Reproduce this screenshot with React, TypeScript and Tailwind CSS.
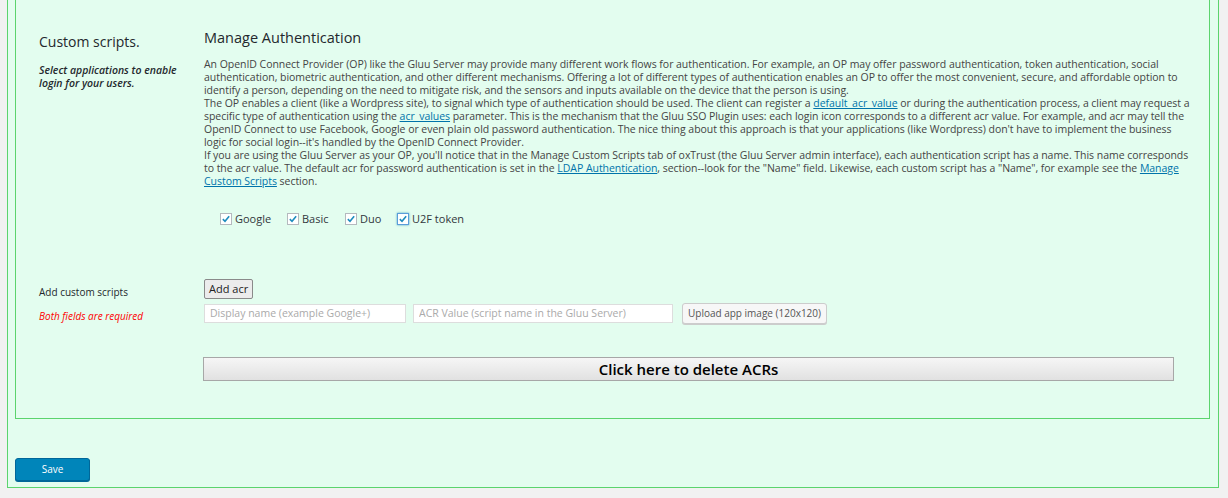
const font = { fontFamily: '"Open Sans", "Liberation Sans", sans-serif' };

const CheckItem = ({ label, focused }: { label: string; focused?: boolean }) => (
  <label className="flex items-center gap-[3px] text-[11px] text-[#32373c]">
    <span
      className={
        "flex h-[12px] w-[12px] items-center justify-center border bg-white " +
        (focused ? "border-[#5b9dd9] shadow-[0_0_2px_rgba(30,140,190,0.8)]" : "border-[#b4b9be]")
      }
    >
      <svg viewBox="0 0 12 12" className="h-[10px] w-[10px]">
        <path d="M2.2 6.2 L4.8 8.8 L9.8 2.6" fill="none" stroke="#1e8cbe" strokeWidth="1.9" />
      </svg>
    </span>
    {label}
  </label>
);

const A = ({ children }: { children: React.ReactNode }) => (
  <a href="#" className="text-[#0073aa] underline">
    {children}
  </a>
);

export default function App() {
  return (
    <div className="min-h-[498px] w-[1228px] bg-[#f1f1f1]" style={font}>
      <div className="ml-[7px] w-[1212px] border-x border-b border-[#5bd46d] bg-[#e3fdef] pb-[6px]">
        <div className="ml-[7px] w-[1195px] border-x border-b border-[#5bd46d] pb-[37px] pl-[23px]">
          {/* row 1 */}
          <div className="flex">
            <div className="w-[165px] shrink-0 pr-[16px] pt-[32px]">
              <h3 className="text-[14px] leading-[20px] text-[#23282d]">Custom scripts.</h3>
              <p className="mt-[12px] text-[10.5px] font-semibold italic leading-[13px] text-[#23282d]">
                Select applications to enable login for your users.
              </p>
            </div>
            <div className="w-[1000px] pt-[28px]">
              <h3 className="text-[14.5px] leading-[20px] text-[#23282d]">Manage Authentication</h3>
              {/* line breaks follow the original wrapping */}
              <div className="mt-[10px] whitespace-nowrap text-[10.5px] leading-[13px] tracking-[-0.04px] text-[#444]">
                An OpenID Connect Provider (OP) like the Gluu Server may provide many different work flows for authentication. For example, an OP may offer password authentication, token authentication, social
                <br />
                authentication, biometric authentication, and other different mechanisms. Offering a lot of different types of authentication enables an OP to offer the most convenient, secure, and affordable option to
                <br />
                identify a person, depending on the need to mitigate risk, and the sensors and inputs available on the device that the person is using.
                <br />
                The OP enables a client (like a Wordpress site), to signal which type of authentication should be used. The client can register a <A>default_acr_value</A> or during the authentication process, a client may request a
                <br />
                specific type of authentication using the <A>acr_values</A> parameter. This is the mechanism that the Gluu SSO Plugin uses: each login icon corresponds to a different acr value. For example, and acr may tell the
                <br />
                OpenID Connect to use Facebook, Google or even plain old password authentication. The nice thing about this approach is that your applications (like Wordpress) don't have to implement the business
                <br />
                logic for social login--it's handled by the OpenID Connect Provider.
                <br />
                If you are using the Gluu Server as your OP, you'll notice that in the Manage Custom Scripts tab of oxTrust (the Gluu Server admin interface), each authentication script has a name. This name corresponds
                <br />
                to the acr value. The default acr for password authentication is set in the <A>LDAP Authentication</A>, section--look for the "Name" field. Likewise, each custom script has a "Name", for example see the <A>Manage</A>
                <br />
                <A>Custom Scripts</A> section.
              </div>
              <div className="mt-[23px] flex items-center pl-[16px]">
                <div className="w-[67px]">
                  <CheckItem label="Google" />
                </div>
                <div className="w-[58px]">
                  <CheckItem label="Basic" />
                </div>
                <div className="w-[52px]">
                  <CheckItem label="Duo" />
                </div>
                <CheckItem label="U2F token" focused />
              </div>
            </div>
          </div>

          {/* row 2 */}
          <div className="mt-[47px] flex">
            <div className="w-[165px] shrink-0 pt-[11px]">
              <div className="text-[10px] leading-[13px] text-[#23282d]">Add custom scripts</div>
              <div className="mt-[11px] text-[10px] italic leading-[13px] text-[#ff0000]">Both fields are required</div>
            </div>
            <div>
              <button className="h-[20px] rounded-[2px] border border-[#8a8a8a] bg-[#ececec] px-[4px] text-[11px] leading-[18px] text-[#222]">
                Add acr
              </button>
              <div className="mt-[4px] flex items-center">
                <input
                  placeholder="Display name (example Google+)"
                  className="h-[19px] w-[202px] border border-[#dddddd] bg-white px-[5px] text-[10.5px] text-[#333] placeholder:text-[#aaaaaa]"
                />
                <input
                  placeholder="ACR Value (script name in the Gluu Server)"
                  className="ml-[7px] h-[19px] w-[260px] border border-[#dddddd] bg-white px-[5px] text-[10.5px] text-[#333] placeholder:text-[#aaaaaa]"
                />
                <button className="ml-[9px] h-[21px] w-[145px] rounded-[3px] border border-[#cccccc] bg-[#f7f7f7] text-[10px] text-[#555] shadow-[0_1px_0_#cccccc]">
                  Upload app image (120x120)
                </button>
              </div>
            </div>
          </div>

          {/* row 3 */}
          <div className="mt-[33px] pl-[164px]">
            <button className="h-[24px] w-[971px] border border-[#a7a7a7] bg-gradient-to-b from-[#f6f6f6] to-[#e1e1e1] text-[15px] font-semibold text-black">
              Click here to delete ACRs
            </button>
          </div>
        </div>

        <div className="mt-[36px] pl-[7px]">
          <button className="h-[23px] w-[75px] rounded-[3px] border border-[#006799] bg-[#0085ba] text-[10px] text-white shadow-[0_1px_0_#006799]">
            Save
          </button>
        </div>
      </div>
    </div>
  );
}
